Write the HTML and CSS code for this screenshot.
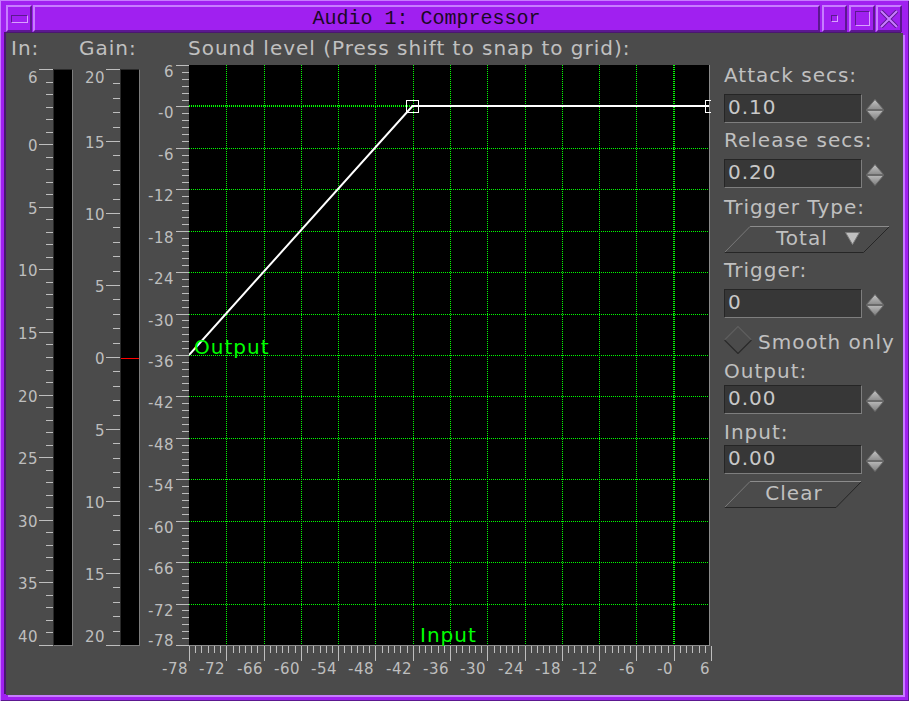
FILE: index.html
```html
<!DOCTYPE html>
<html>
<head>
<meta charset="utf-8">
<title>Audio 1: Compressor</title>
<link rel="stylesheet" href="styles.css">
</head>
<body>
<svg class="defs-holder" width="0" height="0">
  <defs>
    <linearGradient id="arrUp" x1="0" y1="0" x2="0" y2="1">
      <stop offset="0" stop-color="#c4c4c4"/>
      <stop offset="1" stop-color="#8c8c8c"/>
    </linearGradient>
    <linearGradient id="arrDn" x1="0" y1="0" x2="0" y2="1">
      <stop offset="0" stop-color="#b8b8b8"/>
      <stop offset="1" stop-color="#7e7e7e"/>
    </linearGradient>
  </defs>
</svg>
<div class="window">
  <div class="titlebar">
    <div class="tbtn tbtn-menu"><span class="menu-icon"></span></div>
    <div class="title">Audio 1: Compressor</div>
    <div class="tbtn tbtn-min"><span class="min-icon"></span></div>
    <div class="tbtn tbtn-max"><span class="max-icon"></span></div>
    <div class="tbtn tbtn-close">
      <svg class="close-icon" width="18" height="18" viewBox="0 0 18 18">
        <path d="M1 1 L17 17 M17 1 L1 17" class="x-dark"/>
        <path d="M1 1 L17 17 M17 1 L1 17" class="x-light"/>
      </svg>
    </div>
  </div>
  <div class="content">
    <div class="lbl lbl-in">In:</div>
    <div class="lbl lbl-gain">Gain:</div>
    <div class="lbl lbl-sound">Sound level (Press shift to snap to grid):</div>

    <div class="meter meter-in">
      <svg id="scale-in" class="scale" width="47" height="600" viewBox="6 60 47 600"></svg>
      <div class="bar"></div>
    </div>
    <div class="meter meter-gain">
      <svg id="scale-gain" class="scale" width="47" height="600" viewBox="73 60 47 600"></svg>
      <div class="bar"><div class="zero-mark"></div></div>
    </div>

    <div class="graph">
      <svg id="graph" class="scale" width="575" height="625" viewBox="140 60 575 625">
        <defs>
          <clipPath id="gclip"><rect x="189" y="60" width="522" height="590"/></clipPath>
        </defs>
        <rect x="189" y="65" width="520" height="580" class="plot-bg"/>
        <line x1="709.5" y1="65" x2="709.5" y2="646" class="edge"/>
        <line x1="189" y1="645.5" x2="710" y2="645.5" class="edge"/>
        <g id="grid"></g>
        <g id="yticks"></g>
        <g id="xticks"></g>
        <g clip-path="url(#gclip)">
          <polyline points="189,355 412.5,106 709,106" class="curve"/>
          <rect x="406.5" y="100.5" width="12" height="12" class="handle"/>
          <rect x="705.5" y="100.5" width="12" height="12" class="handle"/>
        </g>
        <text x="194" y="354" class="glabel">Output</text>
        <text x="420" y="642" class="glabel">Input</text>
      </svg>
    </div>

    <div class="panel">
      <div class="plabel m3">Attack secs:</div>
      <div class="field m7">
        <div class="tbox">0.10</div>
        <svg class="spin" width="18" height="22" viewBox="0 0 18 22"><polygon points="0.5,10.5 9,0.5 17.5,10.5" class="arr-up"/><polygon points="0.5,11.5 17.5,11.5 9,21.5" class="arr-dn"/></svg>
      </div>
      <div class="plabel m5">Release secs:</div>
      <div class="field m7">
        <div class="tbox">0.20</div>
        <svg class="spin" width="18" height="22" viewBox="0 0 18 22"><polygon points="0.5,10.5 9,0.5 17.5,10.5" class="arr-up"/><polygon points="0.5,11.5 17.5,11.5 9,21.5" class="arr-dn"/></svg>
      </div>
      <div class="plabel m7">Trigger Type:</div>
      <div class="pbtn dropdown m7">
        <svg class="pshape" width="166" height="27" viewBox="0 0 166 27">
          <polygon points="26,0.5 165.5,0.5 139.5,26.5 0.5,26.5" class="pfill"/>
          <line x1="26" y1="0.5" x2="165.5" y2="0.5" class="hi"/>
          <line x1="0.5" y1="26.5" x2="26" y2="0.5" class="mid"/>
          <line x1="0.5" y1="26.5" x2="139.5" y2="26.5" class="lo"/>
          <line x1="139.5" y1="26.5" x2="165.5" y2="0.5" class="lo"/>
        </svg>
        <span class="dd-text">Total</span>
        <svg class="dd-arrow" width="15" height="13" viewBox="0 0 15 13"><polygon points="0.5,0.5 14.5,0.5 7.5,12.5" class="arrfill"/></svg>
      </div>
      <div class="plabel m5">Trigger:</div>
      <div class="field m7">
        <div class="tbox">0</div>
        <svg class="spin" width="18" height="22" viewBox="0 0 18 22"><polygon points="0.5,10.5 9,0.5 17.5,10.5" class="arr-up"/><polygon points="0.5,11.5 17.5,11.5 9,21.5" class="arr-dn"/></svg>
      </div>
      <div class="check m8">
        <svg class="diamond" width="28" height="28" viewBox="0 0 28 28">
          <polygon points="14,0.5 27.5,14 14,27.5 0.5,14" class="dfill"/>
          <polyline points="0.5,14 14,0.5 27.5,14" class="dtop"/>
          <polyline points="0.5,14 14,27.5 27.5,14" class="dbot"/>
        </svg>
        <span class="check-text">Smooth only</span>
      </div>
      <div class="plabel m5">Output:</div>
      <div class="field m2">
        <div class="tbox">0.00</div>
        <svg class="spin" width="18" height="22" viewBox="0 0 18 22"><polygon points="0.5,10.5 9,0.5 17.5,10.5" class="arr-up"/><polygon points="0.5,11.5 17.5,11.5 9,21.5" class="arr-dn"/></svg>
      </div>
      <div class="plabel m6">Input:</div>
      <div class="field m1">
        <div class="tbox">0.00</div>
        <svg class="spin" width="18" height="22" viewBox="0 0 18 22"><polygon points="0.5,10.5 9,0.5 17.5,10.5" class="arr-up"/><polygon points="0.5,11.5 17.5,11.5 9,21.5" class="arr-dn"/></svg>
      </div>
      <div class="pbtn clear m7">
        <svg class="pshape" width="138" height="27" viewBox="0 0 138 27">
          <polygon points="26,0.5 137.5,0.5 112,26.5 0.5,26.5" class="pfill"/>
          <line x1="26" y1="0.5" x2="137.5" y2="0.5" class="hi"/>
          <line x1="0.5" y1="26.5" x2="26" y2="0.5" class="mid"/>
          <line x1="0.5" y1="26.5" x2="112" y2="26.5" class="lo"/>
          <line x1="112" y1="26.5" x2="137.5" y2="0.5" class="lo"/>
        </svg>
        <span class="clear-text">Clear</span>
      </div>
    </div>
  </div>
</div>
<script src="script.js"></script>
</body>
</html>
```

FILE: styles.css
```css
* { box-sizing: border-box; }
html, body { margin: 0; padding: 0; }
body {
  width: 909px;
  height: 701px;
  overflow: hidden;
  background: #4b4b4b;
  font-family: "DejaVu Sans", sans-serif;
}
.defs-holder { position: absolute; width: 0; height: 0; }
.window {
  width: 909px;
  height: 701px;
  background: #a020f0;
  padding: 5px 6px 6px 6px;
  display: flex;
  flex-direction: column;
  box-shadow: inset 1px 1px 0 #c77cff, inset -1px -1px 0 #5c1890;
}
.titlebar {
  height: 27px;
  display: flex;
  margin-bottom: 1px;
  flex: none;
}
.tbtn, .title {
  border-style: solid;
  border-width: 2px;
  border-color: #c77cff #5c1890 #5c1890 #c77cff;
  background: #a020f0;
  display: flex;
  align-items: center;
  justify-content: center;
}
.tbtn-menu { width: 26px; }
.title {
  flex: 1;
  margin-left: 1px;
  font-family: "Liberation Mono", "DejaVu Sans Mono", monospace;
  font-size: 20px;
  color: #1a0826;
  padding-bottom: 1px;
}
.tbtn-min { width: 25px; margin-left: 2px; }
.tbtn-max { width: 26px; margin-left: 2px; }
.tbtn-close { width: 26px; margin-left: 1px; margin-right: 1px; }
.menu-icon {
  width: 17px;
  height: 8px;
  border: 1px solid;
  border-color: #5c1890 #d9a0ff #d9a0ff #5c1890;
}
.min-icon {
  width: 7px;
  height: 7px;
  border: 1px solid;
  border-color: #5c1890 #d9a0ff #d9a0ff #5c1890;
}
.max-icon {
  width: 15px;
  height: 15px;
  border: 1px solid;
  border-color: #5c1890 #d9a0ff #d9a0ff #5c1890;
}
.close-icon { display: block; }
.x-dark { stroke: #5c1890; stroke-width: 4; fill: none; }
.x-light { stroke: #c77cff; stroke-width: 2; fill: none; }

.content {
  flex: 1;
  background: #4b4b4b;
  display: grid;
  grid-template-columns: 67px 67px 575px 1fr;
  grid-template-rows: 27px 1fr;
  color: #c0c0c0;
  box-shadow: -2px -1px 0 #4a1670, 2px 2px 0 #c77cff;
  overflow: hidden;
}
.lbl {
  grid-row: 1;
  padding-top: 3px;
  font-size: 20px;
  line-height: 24px;
  letter-spacing: 1px;
  white-space: nowrap;
}
.lbl-in { grid-column: 1; padding-left: 5px; }
.lbl-gain { grid-column: 2; padding-left: 6px; }
.lbl-sound { grid-column: 3 / span 2; padding-left: 48px; }

.meter {
  grid-row: 2;
  display: flex;
  align-items: flex-start;
}
.meter-in { grid-column: 1; }
.meter-gain { grid-column: 2; }
.graph { grid-row: 2; grid-column: 3; }
.scale { display: block; }
.bar {
  position: relative;
  width: 20px;
  height: 577px;
  margin-top: 9px;
  background: #000;
  border-style: solid;
  border-width: 1px;
  border-color: #2a2a2a #7c7c7c #7c7c7c #2a2a2a;
}
.zero-mark {
  position: absolute;
  left: 0;
  right: 0;
  top: 288px;
  height: 1px;
  background: #ff0000;
}

.tick { stroke: #bebebe; stroke-width: 1; shape-rendering: crispEdges; }
.lab {
  font-family: "DejaVu Sans", sans-serif;
  font-size: 15px;
  letter-spacing: 0.5px;
  fill: #bebebe;
}
.plot-bg { fill: #000; }
.edge { stroke: #8a8a8a; stroke-width: 1; shape-rendering: crispEdges; }
.gridline { stroke: #00ff00; stroke-dasharray: 1 1; fill: none; }
.curve { fill: none; stroke: #fff; stroke-width: 2; }
.handle { fill: none; stroke: #fff; stroke-width: 1; shape-rendering: crispEdges; }
.glabel {
  font-family: "DejaVu Sans", sans-serif;
  font-size: 20px;
  letter-spacing: 1px;
  fill: #00ff00;
}

.panel {
  grid-row: 2;
  grid-column: 4;
  padding-left: 9px;
  display: flex;
  flex-direction: column;
  align-items: flex-start;
}
.plabel {
  font-size: 20px;
  line-height: 24px;
  height: 24px;
  letter-spacing: 1px;
  white-space: nowrap;
}
.m1 { margin-top: 1px; }
.m2 { margin-top: 2px; }
.m3 { margin-top: 3px; }
.m5 { margin-top: 5px; }
.m6 { margin-top: 6px; }
.m7 { margin-top: 7px; }
.m8 { margin-top: 8px; }

.field {
  display: flex;
  align-items: flex-start;
  height: 29px;
}
.tbox {
  width: 138px;
  height: 29px;
  background: #373737;
  border: 1px solid;
  border-color: #252525 #7e7e7e #7e7e7e #252525;
  padding-left: 3px;
  font-size: 20px;
  line-height: 25px;
  letter-spacing: 1px;
  color: #c8c8c8;
}
.spin { display: block; margin-left: 4px; margin-top: 5px; }
.arr-up { fill: url(#arrUp); stroke: #6a6a6a; stroke-width: 1; }
.arr-dn { fill: url(#arrDn); stroke: #6a6a6a; stroke-width: 1; }

.pbtn {
  position: relative;
  height: 27px;
  display: flex;
  align-items: flex-start;
}
.pshape { position: absolute; left: 0; top: 0; }
.pfill { fill: #4b4b4b; }
.hi { stroke: #8c8c8c; stroke-width: 1; }
.mid { stroke: #7a7a7a; stroke-width: 1; }
.lo { stroke: #262626; stroke-width: 1; }
.dropdown { width: 166px; }
.clear { width: 138px; justify-content: center; }
.dd-text, .clear-text {
  position: relative;
  font-size: 20px;
  line-height: 24px;
  letter-spacing: 1px;
  color: #c0c0c0;
}
.dd-text { margin-left: 52px; }
.clear-text { margin-left: 2px; }
.dd-arrow { position: relative; display: block; margin-left: 17px; margin-top: 6px; }
.arrfill { fill: #c0c0c0; stroke: #7a7a7a; stroke-width: 1; }

.check {
  display: flex;
  align-items: flex-start;
  height: 28px;
}
.diamond { display: block; }
.dfill { fill: #4b4b4b; }
.dtop { fill: none; stroke: #5e5e5e; stroke-width: 1.2; }
.dbot { fill: none; stroke: #2a2a2a; stroke-width: 1.2; }
.check-text {
  margin-left: 6px;
  margin-top: 4px;
  font-size: 20px;
  line-height: 24px;
  letter-spacing: 1px;
  white-space: nowrap;
}
```

FILE: script.js
```js
(function () {
  var NS = 'http://www.w3.org/2000/svg';
  function mk(p, t, a, txt) {
    var e = document.createElementNS(NS, t);
    for (var k in a) e.setAttribute(k, a[k]);
    if (txt !== undefined) e.textContent = txt;
    p.appendChild(e);
    return e;
  }
  function px(v) { return Math.round(v) + 0.5; }

  // Input meter scale
  var sIn = document.getElementById('scale-in');
  var kIn = 576 / 46;
  for (var v = 6; v >= -40; v--) {
    var yr = 69 + (6 - v) * kIn;
    var y = px(yr);
    var major = (v === 6 || (v <= 0 && v % 5 === 0));
    mk(sIn, 'line', { x1: major ? 39 : 46, x2: 53, y1: y, y2: y, 'class': 'tick' });
    if (major) {
      var by = Math.round(yr) + 7;
      if (v === 6) by = 83;
      if (v === -40) by = 642;
      mk(sIn, 'text', { x: 38, y: by, 'text-anchor': 'end', 'class': 'lab' }, String(Math.abs(v)));
    }
  }

  // Gain meter scale
  var sG = document.getElementById('scale-gain');
  var kG = 576 / 40;
  for (var g = 20; g >= -20; g--) {
    var gyr = 69 + (20 - g) * kG;
    var gy = px(gyr);
    var gm = (g % 5 === 0);
    mk(sG, 'line', { x1: gm ? 106 : 113, x2: 120, y1: gy, y2: gy, 'class': 'tick' });
    if (gm) {
      var gb = Math.round(gyr) + 7;
      if (g === 20) gb = 83;
      if (g === -20) gb = 642;
      mk(sG, 'text', { x: 105, y: gb, 'text-anchor': 'end', 'class': 'lab' }, String(Math.abs(g)));
    }
  }

  // Graph
  var grid = document.getElementById('grid');
  var yt = document.getElementById('yticks');
  var xt = document.getElementById('xticks');
  var ky = 580 / 84;
  var kx = 522 / 84;
  function lab(n) { return n === 0 ? '-0' : String(n); }

  for (var a = 0; a >= -72; a -= 6) {
    var hy = 65 + (6 - a) * ky;
    if (a === 0) {
      mk(grid, 'line', { x1: 189, x2: 709, y1: Math.round(hy), y2: Math.round(hy), 'class': 'gridline', 'stroke-width': 2 });
    } else {
      mk(grid, 'line', { x1: 189, x2: 709, y1: px(hy), y2: px(hy), 'class': 'gridline', 'stroke-width': 1 });
    }
  }
  for (var b = -72; b <= 0; b += 6) {
    var vx = 189 + (b + 78) * kx;
    if (b === 0) {
      mk(grid, 'line', { y1: 65, y2: 645, x1: Math.round(vx), x2: Math.round(vx), 'class': 'gridline', 'stroke-width': 2 });
    } else {
      mk(grid, 'line', { y1: 65, y2: 645, x1: px(vx), x2: px(vx), 'class': 'gridline', 'stroke-width': 1 });
    }
  }

  for (var c = 6; c >= -78; c--) {
    var cyr = 65 + (6 - c) * ky;
    var cy = px(cyr);
    var cm = (c % 6 === 0);
    mk(yt, 'line', { x1: cm ? 176 : 182, x2: 189, y1: cy, y2: cy, 'class': 'tick' });
    if (cm) {
      var cb = Math.round(cyr) + 12;
      if (c === -78) cb = 646;
      mk(yt, 'text', { x: 174, y: cb, 'text-anchor': 'end', 'class': 'lab' }, lab(c));
    }
  }

  for (var d = -78; d <= 6; d++) {
    var dxr = 189 + (d + 78) * kx;
    var dx = px(dxr);
    var dm = (d % 6 === 0);
    mk(xt, 'line', { x1: dx, x2: dx, y1: 646, y2: dm ? 661 : 653, 'class': 'tick' });
    if (dm) {
      mk(xt, 'text', { x: Math.round(dxr) - 1, y: 674, 'text-anchor': 'end', 'class': 'lab' }, lab(d));
    }
  }
})();
```
